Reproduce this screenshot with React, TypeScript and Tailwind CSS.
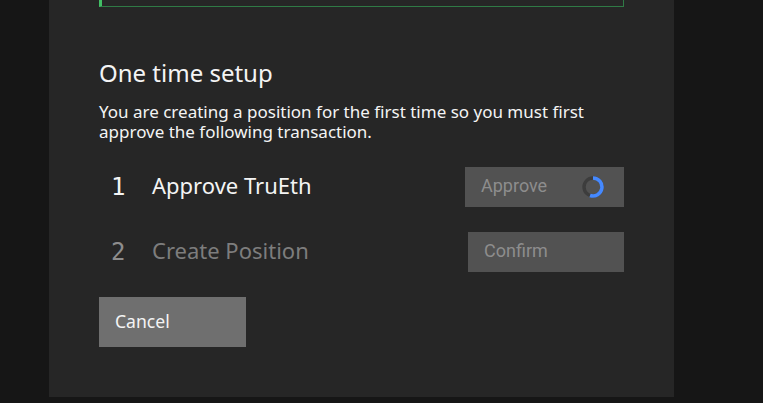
import React from 'react';

const Step = ({ num, label, action, active, spinner }: { num: string; label: string; action: string; active?: boolean; spinner?: boolean }) => (
  <div className="flex items-center justify-between h-10">
    <div className="flex items-center">
      <span className={`w-[53px] pl-[12px] text-[24px] font-['DejaVu_Sans_Mono',monospace] ${active ? 'text-[#f4f4f4]' : 'text-[#8d8d8d]'}`}>{num}</span>
      <span className={`text-[22px] leading-[26px] -mt-[5px] ${active ? 'text-[#f4f4f4]' : 'text-[#7d7d7d]'}`}>{label}</span>
    </div>
    <button className={`flex items-center justify-between h-10 bg-[#525252] pl-4 pr-5 text-[#8d8d8d] text-[18px] font-['Roboto',sans-serif] ${spinner ? 'w-[159px]' : 'w-[156px]'}`}>
      <span className="-mt-[3px]">{action}</span>
      {spinner && (
        <svg width="22" height="22" viewBox="0 0 22 22" fill="none" className="shrink-0">
          <circle cx="11" cy="11" r="9" stroke="#3d3d3d" strokeWidth="3.4" />
          <path d="M11 2 A9 9 0 1 1 8 19.5" stroke="#4589ff" strokeWidth="3.6" />
        </svg>
      )}
    </button>
  </div>
);

export default function App() {
  return (
    <div className="h-[403px] overflow-hidden bg-[#161616] font-['Noto_Sans',sans-serif]">
      <div className="ml-[49px] w-[625px] h-[397px] bg-[#262626] pl-[50px] pr-[50px]">
        <div className="h-[7px] border-l-[3px] border-l-[#42be65] border-b border-r border-b-[#2f7a45] border-r-[#2f7a45]" />
        <h2 className="mt-[50px] text-[24px] leading-8 text-[#f4f4f4]">One time setup</h2>
        <p className="mt-[13px] text-[17px] leading-[20px] text-[#f4f4f4]">
          You are creating a position for the first time so you must first
          <br />
          approve the following transaction.
        </p>
        <div className="mt-[25px] flex flex-col gap-[25px]">
          <Step num="1" label="Approve TruEth" action="Approve" active spinner />
          <Step num="2" label="Create Position" action="Confirm" />
        </div>
        <button className="mt-[25px] block w-[147px] h-[50px] bg-[#6f6f6f] text-left pl-4 pb-[2px] text-[17.6px] text-[#f4f4f4]">Cancel</button>
      </div>
    </div>
  );
}
